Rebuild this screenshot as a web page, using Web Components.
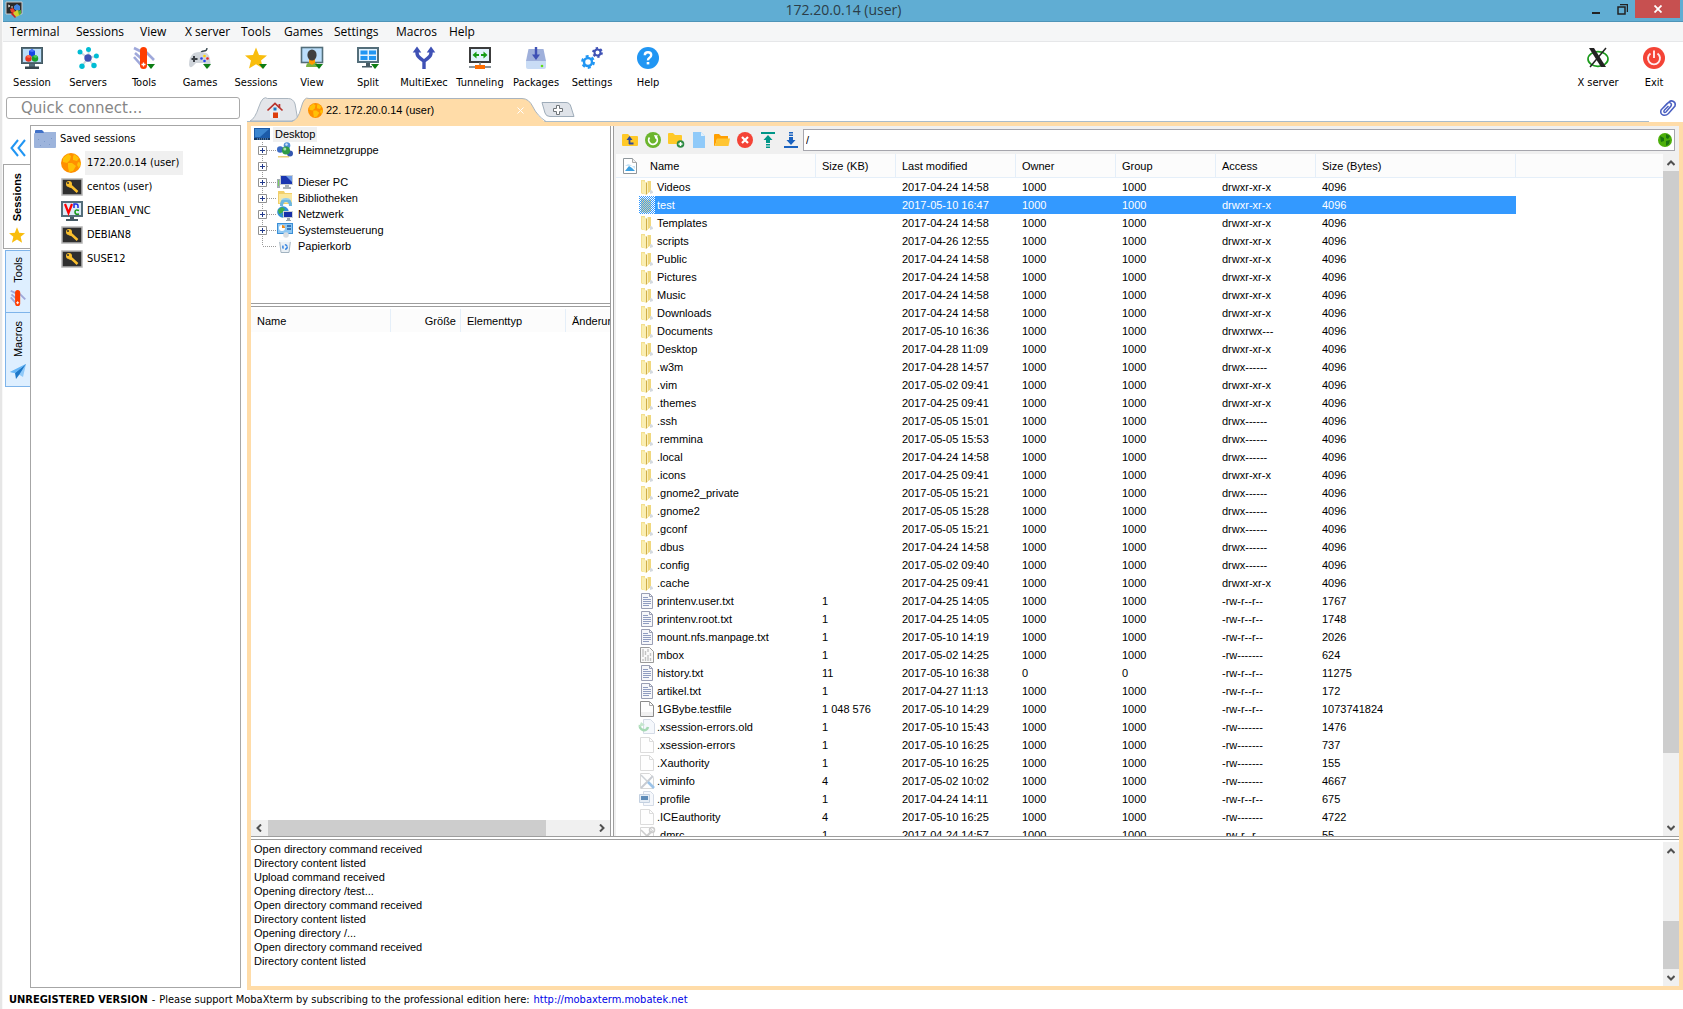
<!DOCTYPE html>
<html lang="en">
<head>
<meta charset="utf-8">
<title>172.20.0.14 (user)</title>
<style>
html,body{margin:0;height:100%}
body{background:#fff;color:#000;overflow:hidden;
 --ui:"DejaVu Sans Condensed","DejaVu Sans",sans-serif;
 --list:"Liberation Sans",Arial,sans-serif;
 --seg:"Open Sans","Noto Sans",sans-serif;
 font:11px/14px var(--list)}
</style>
</head>
<body>
<moba-app></moba-app>
<script>
const ICONS = {
 app:['0 0 16 16','<path d="M0 0h16v12H0z" fill="#2b2b2b" stroke="#ccc"/><path d="M2 3l2 1-2 1M5 5h2" stroke="#fff" fill="none" stroke-width=".8"/><path d="M4 7l3-1 2 3v3L5 10z" fill="#e8412c"/><path d="M8 4l3-2 3 2v4l-3 1-3-2z" fill="#3f83e0"/><path d="M7 11l4-3 4 2-1 3-4 2z" fill="#d6ce2c"/><path d="M12 9l3-1v4l-2 1z" fill="#55b033"/><path d="M6 10l4 5-1 1-4-4z" fill="#c22"/>'],
 session:['0 0 22 22','<rect x=".5" y=".5" width="21" height="16" fill="#546e7a" stroke="#455a64"/><rect x="2" y="2" width="18" height="13" fill="#bbdefb"/><path d="M8 17h6v3H8z" fill="#546e7a"/><path d="M4 19.500h14V22H4z" fill="#37474f"/><path d="M8 4l3-2 3 2v4l-3 2-3-2z" fill="#1546e8"/><path d="M8 4l3 1 3-1-3-2z" fill="#4b78ff"/><circle cx="7.500" cy="11.500" r="3.200" fill="#e8321c"/><path d="M5 10l2.500-2 3 1-2 2z" fill="#ff6a4d"/><circle cx="14" cy="11.500" r="3.200" fill="#17a02c"/><path d="M12 9l3-1 2 2-3 1z" fill="#49c95c"/>'],
 servers:['0 0 22 22','<path d="M11 11L3 5M11 11l1-9M11 11l8-2M11 11l6 8M11 11l-6 8" stroke="#cfd8dc" stroke-width="2"/><g fill="#00bcd4"><circle cx="3" cy="5" r="2.500"/><circle cx="11.500" cy="2.600" r="2.500"/><circle cx="19.400" cy="9" r="2.500"/><circle cx="17" cy="18.500" r="2.700"/><circle cx="5" cy="19.300" r="2.700"/></g><circle cx="11" cy="11" r="3.700" fill="#3f51b5"/>'],
 knife:['0 0 22 22','<path d="M1 1l8 4M2 6l8 7M1 10l8 9M11 3l10 10" stroke="#9fa8da" stroke-width="2.600"/><rect x="7" y="0" width="7" height="22" rx="3.500" fill="#ff3d00"/><path d="M10.500 15.500v4M8.500 17.500h4" stroke="#fff" stroke-width="1.300"/>'],
 pad:['0 0 22 22','<path d="M11 8q1-4 4-4t3-3" stroke="#37474f" fill="none" stroke-width="1.300"/><path d="M5 6q6-2 12 0 3 1 4 6t0 8q-2 2-4-1l-2-3H7l-3 3q-3 3-4-1 0-9 5-12z" fill="#cfd4da"/><path d="M5 9v6M2.500 12h6" stroke="#3a3f45" stroke-width="2"/><circle cx="15.500" cy="9" r="1.300" fill="#fdd800"/><circle cx="12.500" cy="11.500" r="1.300" fill="#2244ee"/><circle cx="18.500" cy="11.500" r="1.300" fill="#e22"/><circle cx="15.500" cy="14" r="1.300" fill="#2244ee"/>'],
 star:['0 0 22 22','<path d="M11 .5l3 7.500 8 .5-6 5 2 8-7-4.300L4 21.500l2-8-6-5L8 8z" fill="#f9bd0c"/>'],
 view:['0 0 22 22','<rect x=".5" y=".5" width="21" height="15" fill="#bbdefb" stroke="#546e7a" stroke-width="1.600"/><path d="M5 20q0-5 6-5t6 5z" fill="#7cb342"/><path d="M8 12h6v4l-3 2-3-2z" fill="#ff9800"/><ellipse cx="11" cy="8" rx="4.600" ry="5.600" fill="#3f3f3f"/>'],
 split:['0 0 22 22','<rect x="1" y="1" width="20" height="14" fill="#e3f2fd" stroke="#546e7a" stroke-width="2"/><path d="M3.500 3.500h7v4h-7zM12 3.500h7v4h-7zM3.500 9h7v4h-7zM12 9h7v4h-7z" fill="#2196f3"/><path d="M9 16h4v3h2v1.500H5V19h4z" fill="#455a64"/>'],
 multi:['0 0 22 22','<path d="M11 22v-8M4 4v2q0 3 3.500 5.500T11 15q0-1 3.500-3.500T18 6V4" stroke="#3f51b5" stroke-width="3.400" fill="none"/><path d="M4-.5l4.300 6H-.3zM18-.5l4.300 6h-8.600z" fill="#3f51b5"/>'],
 tunnel:['0 0 22 22','<rect x="1" y="1" width="20" height="14" fill="#e3f2fd" stroke="#3c3c3c" stroke-width="2"/><path d="M3.500 8l4-3.500V7h2.500v2H7.500v2.500zM18.500 8l-4-3.500V7H12v2h2.500v2.500z" fill="#169b16"/><path d="M11 15.500V19M0 20h22" stroke="#8a9399" stroke-width="1.800"/><rect x="6" y="18" width="10" height="4" fill="#ff6d00"/>'],
 pack:['0 0 22 22','<path d="M3.500 2h15L21 14H1z" fill="#9fb0db"/><path d="M1 14h20v6q0 2-2 2H3q-2 0-2-2z" fill="#c9dcf5"/><path d="M11 0v8" stroke="#3f51b5" stroke-width="2.400"/><path d="M11 13L7 7.500h8z" fill="#3f51b5"/><circle cx="17" cy="19" r="1.300" fill="#64dd17"/>'],
 gears:['0 0 22 22','<circle cx="7" cy="15" r="4" fill="none" stroke="#2196f3" stroke-width="2.500"/><circle cx="7" cy="15" r="5.800" fill="none" stroke="#2196f3" stroke-width="2.200" stroke-dasharray="3 3.070"/><circle cx="16.500" cy="5.500" r="3" fill="none" stroke="#3f51b5" stroke-width="2"/><circle cx="16.500" cy="5.500" r="4.500" fill="none" stroke="#3f51b5" stroke-width="1.800" stroke-dasharray="2.300 2.410"/>'],
 help:['0 0 22 22','<circle cx="11" cy="11" r="11" fill="#2196f3"/><path d="M7.800 8.200q0-3 3.200-3t3.200 2.800q0 1.700-1.700 2.700T11 13.400" stroke="#fff" stroke-width="2.400" fill="none"/><path d="M9.700 15h2.600v2.400H9.700z" fill="#fff"/>'],
 xsrv:['0 0 22 22','<ellipse cx="11" cy="12" rx="10" ry="7.300" fill="none" stroke="#1b9a1b" stroke-width="1.700"/><path d="M2 1h5l12 19h-5z" fill="#222"/><path d="M19 1L3 20" stroke="#222" stroke-width="1.500"/>'],
 exit:['0 0 22 22','<circle cx="11" cy="11" r="11" fill="#f44336"/><path d="M7.500 6.500a6 6 0 1 0 7 0M11 3.500V11" stroke="#ffebee" stroke-width="1.900" fill="none"/>'],
 clip:['0 0 16 16','<path d="M3 8l6-6q2-2 4.500-.5T15 6l-6.500 7.500Q6 16 3 15t-2-5l6-6.500q2-1.500 3.500-.5t.5 3L6 12q-1.500 1-2 0t.5-2l4-4" stroke="#4a5fc1" stroke-width="1.500" fill="none"/>'],
 home:['0 0 16 16','<path d="M3 8h10v8H3z" fill="#eceff1"/><path d="M11.500 2h1.800v4h-1.800z" fill="#b33"/><path d="M.5 8.500L8 1.500l7.500 7" stroke="#b8322b" stroke-width="1.700" fill="none"/><path d="M6 10.500h5V16H6z" fill="#dd3f0c"/><path d="M6.500 5.500h3v3h-3z" fill="#1a78c2"/>'],
 globe:['0 0 20 20','<circle cx="10" cy="10" r="10" fill="#ff8f00"/><path d="M2 5l5-4 3 2-1 4-3 3-4-1z" fill="#ffc107"/><path d="M13 1l5 4-2 3-4-1 0-3z" fill="#ffc107"/><path d="M7 10l4 0 4 3-3 5-4 1-1-5z" fill="#ffc107"/><path d="M17 9l3 1-2 5-2-3z" fill="#ffc107"/>'],
 greenglobe:['0 0 14 14','<circle cx="7" cy="7" r="7" fill="#4caf0a"/><path d="M2 3l4 2v3L3 9zM8 1l4 2-2 3-2-1zM8 8l4-1-1 4-3 2z" fill="#1c7410"/>'],
 folder:['0 0 22 18','<path d="M1 1q0-1 1-1h6l3 3h10q1 0 1 1v13H1z" fill="#3f70c8"/><path d="M0 4q0-1 1-1h8l2-1h11v15q0 1-1 1H1q-1 0-1-1z" fill="#9db4dc"/><path d="M4 9h1v1H4zm6 2h1v1h-1zm7-3h1v1h-1zM6 15h1v1H6zm9-1h1v1h-1z" fill="#7c9acb"/>'],
 key:['0 0 22 18','<path d="M1 1h20v16H1z" fill="#2f2f2f" stroke="#b5b5b5" stroke-width="1.500"/><circle cx="8" cy="6" r="3" fill="#fbc02d"/><circle cx="7" cy="5" r="1" fill="#2f2f2f"/><path d="M9.500 7.500l7 6.500M8 8l3 1" stroke="#fbc02d" stroke-width="2.400"/>'],
 vnc:['0 0 22 20','<rect x="1" y="1" width="20" height="14" fill="#ddebf8" stroke="#546e7a" stroke-width="2"/><path d="M9 16h4v2h4v2H5v-2h4z" fill="#455a64"/><path d="M4 3l3.500 9L11 3" stroke="#f00" stroke-width="2.200" fill="none"/><path d="M13 7V3h2q2 0 2 2v2" stroke="#1a2ce0" stroke-width="1.500" fill="none"/><path d="M18 9.500q-4-1.500-4 1.500t4 2" stroke="#169b16" stroke-width="1.600" fill="none"/>'],
 plane:['0 0 16 16','<path d="M0 8L16 0 13 13 8 10z" fill="#90caf9"/><path d="M16 0L5 9l1 6 3-4z" fill="#1e78c8"/><path d="M0 8L16 0 5 9z" fill="#64b5f6"/>'],
 chev:['0 0 16 16','<path d="M8 0L1.500 8 8 16M15 0L8.500 8l6.500 8" stroke="#2196f3" stroke-width="2" fill="none"/>'],
 desk:['0 0 16 14','<path d="M0 1h16v12H0z" fill="#1c5ba8"/><path d="M1 2h14l-9 8H1z" fill="#3c86cf"/><path d="M0 11h16v2H0z" fill="#17375f"/><path d="M3 12h11" stroke="#7fb0e0" stroke-dasharray="1 1"/>'],
 heim:['0 0 16 16','<path d="M1 14h11v1.500H1z" fill="#ecd07a"/><circle cx="10" cy="3.500" r="3.300" fill="#4f8fd6"/><circle cx="3.200" cy="7.500" r="3.200" fill="#3c6bc4"/><circle cx="13" cy="11.500" r="3" fill="#3457b0"/><circle cx="9" cy="8.500" r="4" fill="#2f9b46"/><circle cx="7.800" cy="7" r="1.500" fill="#a9dfae"/><circle cx="9.500" cy="2.500" r="1.200" fill="#cfe3f8"/>'],
 pc:['0 0 16 16','<path d="M0 5h3v9H0z" fill="#a3adb5"/><path d="M1 6h1v6H1z" fill="#7dd05e"/><path d="M3 1h13v10H3z" fill="#c9cfd4"/><path d="M4 2h11v8H4z" fill="#1a36b0"/><path d="M9 2h6v6z" fill="#6e9be8"/><path d="M8 11h4v2h2v2H6v-2h2z" fill="#a9b2b8"/>'],
 lib:['0 0 16 16','<path d="M1 1h6l1 2h7v11H1z" fill="#f1cf6b"/><path d="M2 4h13v9H2z" fill="#fbe79d"/><path d="M3 16q0-8 6-8t6 8h-3q0-4-3-4t-3 4z" fill="#6bb6e0"/><path d="M4 9h10" stroke="#bfe3f5"/>'],
 netz:['0 0 16 16','<circle cx="6" cy="6" r="5.800" fill="#2f8fd8"/><path d="M1 4l4-3 3 2-3 4-3 1zM5 8l4 1-2 3z" fill="#3fae49"/><path d="M6 5h10v7H6z" fill="#cdd3d8"/><path d="M7 6h8v5H7z" fill="#1730a8"/><path d="M10 12h3v2h1v1H9v-1h1z" fill="#9aa4ab"/>'],
 sys:['0 0 16 16','<path d="M0 1h16v11H0z" fill="#3c8fd6"/><path d="M1 2h14v9H1z" fill="#8ec7f2"/><circle cx="5" cy="6" r="3" fill="#fff"/><path d="M5 6V3a3 3 0 0 1 3 3z" fill="#ef8b1d"/><path d="M10 4h4M10 7h4" stroke="#1d5ea8" stroke-width="1.400"/><circle cx="9" cy="13" r="2.800" fill="#d9dee2"/>'],
 bin:['0 0 16 16','<path d="M2.500 2.500h11l-1.500 12H4z" fill="#eaf0f5" stroke="#a2b3c0"/><path d="M2 2h12v2H2z" fill="#f4f8fb"/><circle cx="8" cy="9" r="2.200" fill="none" stroke="#2c7fe0" stroke-width="1.400" stroke-dasharray="3 1.600"/>'],
 up:['0 0 16 16','<path d="M0 3q0-1 1-1h5l2 2h7q1 0 1 1v8q0 1-1 1H1q-1 0-1-1z" fill="#ffc928"/><path d="M7.500 12V6M7 11.500h4.500" stroke="#304a9c" stroke-width="1.800"/><path d="M7.500 4l3 4h-6z" fill="#304a9c"/>'],
 reload:['0 0 16 16','<circle cx="8" cy="8" r="8" fill="#6cb52d"/><path d="M4.500 5.500a4.300 4.300 0 1 0 6.500-.5" stroke="#fff" stroke-width="1.800" fill="none"/><path d="M9 3l4 .5-2.500 3.500z" fill="#fff"/>'],
 newf:['0 0 16 16','<path d="M0 2q0-1 1-1h4l2 2h6q1 0 1 1v8H1q-1 0-1-1z" fill="#ffc928"/><circle cx="12.500" cy="12" r="3.800" fill="#2e8b45"/><path d="M12.500 10v4M10.500 12h4" stroke="#fff" stroke-width="1.500"/>'],
 page:['0 0 16 16','<path d="M2 0h8l4 4v12H2z" fill="#90caf9"/><path d="M10 0v4h4z" fill="#e1f1fd"/>'],
 open:['0 0 16 16','<path d="M0 3q0-1 1-1h4l2 2h7v3H3l-2 7q-1 0-1-1z" fill="#ff9f00"/><path d="M3 6.500h13l-1.500 7.500H1z" fill="#ffc533"/>'],
 del:['0 0 16 16','<circle cx="8" cy="8" r="8" fill="#f44336"/><path d="M5 5l6 6M11 5l-6 6" stroke="#fff" stroke-width="2.200"/>'],
 upl:['0 0 16 16','<path d="M1 1h14" stroke="#009688" stroke-width="2"/><path d="M8 3l4.500 5H10v3H6V8H3.500zM6 12h4v1.500H6zM6 14.500h4V16H6z" fill="#009688"/>'],
 dwn:['0 0 16 16','<path d="M1 15h14" stroke="#1b63c0" stroke-width="2"/><path d="M8 13L3.500 8H6V5h4v3h2.500zM6 2.500h4V4H6zM6 0h4v1.500H6z" fill="#1b63c0"/>'],
 head:['0 0 14 16','<path d="M.5.5h9l4 4v11H.5z" fill="#fff" stroke="#8f979c"/><path d="M9.500.5v4h4" fill="#eee" stroke="#aaa"/><path d="M2 13l4-5 3 2 3 3z" fill="#3a9fe0"/><path d="M2 8l3-2 3 1 4 4v-3H2z" fill="#c6e3f6"/>'],
 dir:['0 0 16 18','<path d="M2 2h4v14H3l-1-1z" fill="#f3df8f"/><path d="M3 3l4 1v13l-4-2z" fill="#faeeb2"/><path d="M7 5l1-1v12l-1 1z" fill="#cfae4a"/><path d="M8 3h4v10l-4 3z" fill="#f0d87f"/><path d="M8 3h1v12H8z" fill="#fbf0bb"/><path d="M11 12q3 0 3 3l-3 1z" fill="#d3d9df"/>'],
 dirsel:['0 0 16 18','<path d="M2 3l2-1 4 2 4-1v12l-4 2-6-1z" fill="#e2d78f"/><path d="M0 0h16v18H0z" fill="url(#d)"/><defs><pattern id="d" width="2" height="2" patternUnits="userSpaceOnUse"><path d="M0 0h1v1H0zM1 1h1v1H1z" fill="#3399ff"/></pattern></defs>'],
 txt:['0 0 16 18','<path d="M2.500 1.500h8l3 3v12h-11z" fill="#f6f7fa" stroke="#9a9fb4"/><path d="M10.500 1.500v3h3" fill="none" stroke="#9a9fb4"/><path d="M4 5.500h5M4 7.500h8M4 9.500h8M4 11.500h8M4 13.500h6" stroke="#8f9cc0"/>'],
 mbox:['0 0 16 18','<path d="M1.500 1.500h9l4 4v11h-13z" fill="#fafafa" stroke="#9a9a9a"/><path d="M4 3v8M6.500 5v4M9 3v3M4 13v2M6.500 11v4M9 9v6M11.500 7v3M11.500 12v3" stroke="#c4c4c4" stroke-width="1.400"/>'],
 file:['0 0 16 18','<path d="M1.500 1.500h9l4 4v11h-13z" fill="#fdfdfd" stroke="#8a8a8a"/><path d="M10.500 1.500v4h4" fill="none" stroke="#aaa"/><path d="M2 12h12v4H2z" fill="#f0f0f0"/>'],
 ghost:['0 0 16 18','<path d="M1.500 1.500h9l4 4v11h-13z" fill="#fefefe" stroke="#dcdcdc"/><path d="M10.500 1.500v4h4" fill="none" stroke="#dcdcdc"/>'],
 old:['0 0 16 18','<path d="M4.500 1.500h7l4 4v10h-11z" fill="#f5f8fc" stroke="#d4dbe6"/><path d="M1 7a4 4 0 0 0 8 2" fill="none" stroke="#a6d9b4" stroke-width="2.600"/><path d="M0 9l2-5 4 3z" fill="#c4e6cd"/>'],
 vim:['0 0 16 18','<path d="M1.500 1.500h9l4 4v11h-13z" fill="#fefefe" stroke="#d8d8d8"/><path d="M2 16L14 4" stroke="#c8ccd2" stroke-width="2"/><path d="M2 3l7 7" stroke="#ccd1d6" stroke-width="1.500"/><path d="M9 10l6 6" stroke="#9cc3e8" stroke-width="2.600"/>'],
 prof:['0 0 16 18','<path d="M4.500 1.500h7l3 3v11h-10z" fill="#f6f8fc" stroke="#d4dbe6"/><path d="M.5 4.500h10v8H.5z" fill="#e6edf5" stroke="#c3d0e0"/><path d="M2 6h7v4H2z" fill="#5f8cb8"/>'],
 dm:['0 0 16 18','<path d="M1.500 1.500h9l4 4v11h-13z" fill="#fefefe" stroke="#d8d8d8"/><path d="M2 16L13 5" stroke="#ccc" stroke-width="2.200"/><path d="M2 4l10 10" stroke="#ccc" stroke-width="1.500"/><circle cx="13" cy="4" r="2.500" fill="none" stroke="#ccc" stroke-width="1.500"/>'],
 plus:['0 0 10 10','<path d="M3.500.5h3v3h3v3h-3v3h-3v-3h-3v-3h3z" fill="#fff" stroke="#6f7479"/>'],
 expand:['0 0 9 9','<path d="M.5.5h8v8h-8z" fill="#fff" stroke="#919191"/><path d="M2 4.500h5M4.500 2v5" stroke="#223a8c"/>']
};
const $ = (el, css, html) => { el.attachShadow({mode:'open'}).innerHTML =
 `<style>*{box-sizing:border-box}button,input{font:inherit;color:inherit;margin:0;padding:0;border:0;background:none;outline:0}ul,p,h1{margin:0;padding:0;list-style:none;font:inherit}a{text-decoration:none}${css}</style>${html}`; };
const def = (n, css, html) => customElements.define(n, class extends HTMLElement{
 connectedCallback(){ if(!this.shadowRoot) $(this, css, typeof html==='function'?html(this):html); }});

def('moba-icon', ':host{display:block;flex:none;line-height:0}svg{display:block;overflow:visible}',
 e => { const [v,b]=ICONS[e.getAttribute('name')]; const [, , w,h]=v.split(' ');
  const s=e.getAttribute('size'); return `<svg viewBox="${v}" width="${s||w}" height="${s||h}" aria-hidden="true">${b}</svg>`; });
const ic = (n,s) => `<moba-icon name="${n}"${s?` size="${s}"`:''}></moba-icon>`;

def('moba-scroll', `:host{display:flex;background:#f0f0f0;flex:none}
 :host([dir=v]){flex-direction:column;width:16px}:host([dir=h]){height:16px}
 button{flex:none;width:16px;height:17px;display:grid;place-items:center}
 :host([dir=h]) button{height:16px}
 .t{flex:1;display:flex;flex-direction:inherit;min-width:0;min-height:0}
 .a{flex:var(--before) 0 0}.b{flex:var(--thumb) 0 0;background:#cdcdcd}.c{flex:var(--after) 0 0}`,
 e => { const v=e.getAttribute('dir')==='v';
  const ar=d=>`<svg width="8" height="8" viewBox="0 0 8 8"><path d="${d}" stroke="#505050" stroke-width="2" fill="none"/></svg>`;
  return `<button aria-label="Back">${ar(v?'M.5 6L4 2.500 7.500 6':'M6 .5L2.500 4 6 7.500')}</button><div class="t"><div class="a"></div><div class="b"></div><div class="c"></div></div><button aria-label="Forward">${ar(v?'M.5 2L4 5.500 7.500 2':'M2 .5L5.500 4 2 7.500')}</button>`; });

def('moba-titlebar', `:host{display:flex;height:22px;background:#60add3;border-bottom:1px solid #4e94b8;align-items:flex-start;padding:0 3px 0 3px;margin-left:3px}
 moba-icon{margin-top:2px}
 h1{flex:1;text-align:center;font:14px/20px var(--seg);color:#2b3d48;padding-left:82px}
 button{width:26px;height:18px;display:grid;place-items:center}.x{width:45px;background:#c75050}`,
 `${ic('app')}<h1>172.20.0.14 (user)</h1>
 <button aria-label="Minimize"><svg width="9" height="9"><path d="M0 8h8" stroke="#222" stroke-width="2"/></svg></button>
 <button aria-label="Restore"><svg width="11" height="11"><path d="M1 3h7v7H1zM3 .5h7.500V8" stroke="#222" stroke-width="1.500" fill="none"/></svg></button>
 <button class="x" aria-label="Close"><svg width="8" height="8"><path d="M.5.5l7 7M7.500.5l-7 7" stroke="#fff" stroke-width="1.800"/></svg></button>`);

def('moba-menubar', `:host{display:grid;grid-template-columns:66px 64px 45px 56px 43px 50px 62px 53px 1fr;height:20px;background:#f5f6f7;border-bottom:1px solid #e6e7e9;margin-left:3px;padding-left:7px;font:12px/19px var(--seg)}
 button{text-align:left;white-space:nowrap}`,
 ['Terminal','Sessions','View','X server','Tools','Games','Settings','Macros','Help'].map(t=>`<button>${t}</button>`).join(''));

const TB=[['session','Session'],['servers','Servers'],['knife','Tools',1],['pad','Games',1],['star','Sessions',1],['view','View',1],['split','Split',1],['multi','MultiExec'],['tunnel','Tunneling'],['pack','Packages'],['gears','Settings'],['help','Help']];
const tb=([i,t,d])=>`<button><span class="i">${ic(i)}${d?'<i></i>':''}</span><span>${t}</span></button>`;
def('moba-toolbar', `:host{display:flex;padding:5px 1px 0 4px;height:53px;font:11px/14px var(--ui)}
 button{width:56px;display:flex;flex-direction:column;align-items:center;gap:7px;white-space:nowrap}
 .i{position:relative}i{position:absolute;right:0;bottom:0;border:4px solid transparent;border-top:5px solid #0c7d14;border-bottom:0}
 .sp{flex:1}`, TB.map(tb).join('')+'<span class="sp"></span>'+tb(['xsrv','X server'])+tb(['exit','Exit']));

def('moba-quick', `:host{display:block;padding:2px 7px 0 6px}input{width:100%;height:22px;border:1px solid #aaa;border-radius:3px;padding:0 14px;font:15px/20px "DejaVu Sans",sans-serif;display:block;background:#fff}input::placeholder{color:#868686;opacity:1}`,
 '<input type="text" aria-label="Quick connect" placeholder="Quick connect...">');

def('moba-sidetabs', `:host{display:flex;flex-direction:column;width:28px;flex:none;padding-top:15px}
 .c{height:24px;display:flex;align-items:flex-start;padding-left:7px;align-self:flex-start}
 .tab{display:flex;flex-direction:column;align-items:center;background:#deefff;border:1px solid #7eb4ea;border-right:0;margin:0 1px 0 2px;font:11px/14px var(--list);height:75px;justify-content:flex-end;gap:7px;padding-bottom:6px;margin-top:-1px}
 .tab.on{background:#fff;border-color:#a6a6a6;margin:0;font-weight:bold;height:85px;padding:0 2px 5px 0;gap:6px}
 .tab.two{height:63px;margin-top:1px}
 .tab span{writing-mode:vertical-rl;transform:rotate(180deg)}`,
 `<button class="c" aria-label="Collapse">${ic('chev')}</button>
 <button class="tab on"><span>Sessions</span>${ic('star',16)}</button>
 <button class="tab two"><span>Tools</span>${ic('knife',16)}</button>
 <button class="tab"><span>Macros</span>${ic('plane')}</button>`);

def('moba-sessions', `:host{display:block;flex:1;border:1px solid #a6a6a6;margin:0 6px 0 -1px;font:11px/14px var(--ui);padding-top:1px}
 li{display:flex;align-items:center;height:24px;padding-left:30px;gap:2px}
 li.r{padding-left:3px;gap:4px}
 a{color:inherit;padding:5px 4px 5px 2px;white-space:nowrap}
 .r a{padding-left:0}
 li.s a{background:#f0f0f0}
 li>span{width:22px;flex:none}`,
 `<ul><li class="r">${ic('folder')}<a href="#">Saved sessions</a></li>`+[['globe','172.20.0.14 (user)','s'],['key','centos (user)'],['vnc','DEBIAN_VNC'],['key','DEBIAN8'],['key','SUSE12']].map(([i,t,c])=>`<li class="${c||''}"><span>${ic(i)}</span><a href="#">${t}</a></li>`).join('')+'</ul>');

def('moba-tabs', `:host{display:flex;height:27px;padding:3px 0 0 3px;font:11px/20px var(--list);border-bottom:1px solid #a9bccb;align-items:flex-end;margin-right:34px}
 button{position:relative;display:flex;align-items:center;height:23px;isolation:isolate}
 button>svg{position:absolute;inset:0;z-index:-1;width:100%;height:100%;overflow:visible}
 .h{width:48px;justify-content:center;padding-left:1px}.a{width:253px;margin:0 0 -1px -5px;height:24px;padding-left:15px;gap:3px;z-index:1}.a span{flex:1;text-align:left;white-space:nowrap}.a b{width:8px;margin-right:22px}
 .p{width:33px;height:15px;justify-content:center;margin:0 0 4px -5px}`,
 `<button class="h" aria-label="Home"><svg viewBox="0 0 49 23" preserveAspectRatio="none"><path d="M0 23Q5 21 9 9T18 .5H39Q44 .5 46 6L49 23z" fill="#e4e6ea" stroke="#a9b4be"/></svg>${ic('home')}</button>
 <button class="a"><svg viewBox="0 0 253 24" preserveAspectRatio="none"><path d="M-1 24Q5 22 8 10T16 .5H229Q236 .5 240 9T252 24z" fill="#ffdca8"/><path d="M-1 23Q5 22 8 10T16 .5H229Q236 .5 240 9T253 23.500" fill="none" stroke="#a9b4be"/></svg>${ic('globe',15)}<span>22. 172.20.0.14 (user)</span><b><svg width="7" height="7"><path d="M.5.5l6 6M6.500.5l-6 6" stroke="#fff"/></svg></b></button>
 <button class="p" aria-label="New tab"><svg viewBox="0 0 33 15" preserveAspectRatio="none"><path d="M1 .5H25Q29 .5 30 5L33 14.500H9Q5 14.500 4 11z" fill="#dfe3e9" stroke="#9eacb9"/></svg>${ic('plus')}</button>`);

def('moba-tree', `:host{display:block;background:#fff;font:11px/16px var(--list);padding-left:3px}
 li{display:flex;align-items:center;height:16px}
 a{color:inherit;padding:0 2px;line-height:15px}
 .d a{background:#f0f0f0;margin-left:3px}
 .g{width:23px;height:16px;flex:none;display:flex;align-items:center;padding-left:4px;
  background:repeating-linear-gradient(90deg,#999 0 1px,transparent 1px 2px) no-repeat 9px 8px/14px 1px,repeating-linear-gradient(#999 0 1px,transparent 1px 2px) no-repeat 8px 0/1px 16px}
 li:last-child .g{background-size:14px 1px,1px 8px}
 .e .g{background-size:6px 1px,1px 16px}
 .c a{margin-left:3px}`,
 `<ul><li class="d">${ic('desk')}<a href="#">Desktop</a></li>`+[['heim','Heimnetzgruppe'],['',''],['pc','Dieser PC'],['lib','Bibliotheken'],['netz','Netzwerk'],['sys','Systemsteuerung'],['bin','Papierkorb']].map(([i,t],k)=>`<li class="${i?'c':'e'}"><span class="g">${k<6?ic('expand'):''}</span>${i?ic(i)+`<a href="#">${t}</a>`:''}</li>`).join('')+'</ul>');

def('moba-local', `:host{display:flex;flex-direction:column;flex:1;min-height:0;background:#fff;border-top:1px solid #9d9d9d;font:11px/14px var(--list);overflow:hidden}
 .w{flex:1;overflow:hidden}
 table{width:420px;border-collapse:separate;border-spacing:0;table-layout:fixed;margin-top:2px}
 th{font-weight:normal;text-align:left;padding:0 6px;height:23px;background:#fcfcfc;border-right:1px solid #e5eff9}
 th.n{text-align:right;padding-right:4px}
 moba-scroll{--before:1;--thumb:278;--after:48}`,
 `<div class="w"><table><colgroup><col style="width:140px"><col style="width:70px"><col style="width:105px"><col></colgroup><thead><tr><th>Name</th><th class="n">Größe</th><th>Elementtyp</th><th>Änderungsdatum</th></tr></thead></table></div><moba-scroll dir="h"></moba-scroll>`);

def('moba-pathbar', `:host{display:flex;align-items:center;height:28px;padding:0 4px 0 6px;gap:7px;font:11px/14px var(--list)}
 .f{flex:1;display:flex;align-items:center;background:#fff;border:1px solid #a6a6ad;height:22px;margin-left:-3px;padding:0 2px}
 input{flex:1;min-width:0;height:18px}`,
 ['up:Parent directory','reload:Refresh','newf:New folder','page:New file','open:Open','del:Delete','upl:Upload','dwn:Download'].map(s=>{const[a,b]=s.split(':');return `<button aria-label="${b}">${ic(a)}</button>`}).join('')+`<div class="f"><input aria-label="Path" value="/">${ic('greenglobe')}</div>`);

const R=`dir|Videos||04-24 14:58
dirsel|test||05-10 16:47
dir|Templates||04-24 14:58
dir|scripts||04-26 12:55
dir|Public||04-24 14:58
dir|Pictures||04-24 14:58
dir|Music||04-24 14:58
dir|Downloads||04-24 14:58
dir|Documents||05-10 16:36|drwxrwx---
dir|Desktop||04-28 11:09
dir|.w3m||04-28 14:57|drwx------
dir|.vim||05-02 09:41
dir|.themes||04-25 09:41
dir|.ssh||05-05 15:01|drwx------
dir|.remmina||05-05 15:53|drwx------
dir|.local||04-24 14:58|drwx------
dir|.icons||04-25 09:41
dir|.gnome2_private||05-05 15:21|drwx------
dir|.gnome2||05-05 15:28|drwx------
dir|.gconf||05-05 15:21|drwx------
dir|.dbus||04-24 14:58|drwx------
dir|.config||05-02 09:40|drwx------
dir|.cache||04-25 09:41
txt|printenv.user.txt|1|04-25 14:05|-rw-r--r--|1767
txt|printenv.root.txt|1|04-25 14:05|-rw-r--r--|1748
txt|mount.nfs.manpage.txt|1|05-10 14:19|-rw-r--r--|2026
mbox|mbox|1|05-02 14:25|-rw-------|624
txt|history.txt|11|05-10 16:38|-rw-r--r--|11275|0
txt|artikel.txt|1|04-27 11:13|-rw-r--r--|172
file|1GBybe.testfile|1 048 576|05-10 14:29|-rw-r--r--|1073741824
old|.xsession-errors.old|1|05-10 15:43|-rw-------|1476
ghost|.xsession-errors|1|05-10 16:25|-rw-------|737
ghost|.Xauthority|1|05-10 16:25|-rw-------|155
vim|.viminfo|4|05-02 10:02|-rw-------|4667
prof|.profile|1|04-24 14:11|-rw-r--r--|675
ghost|.ICEauthority|4|05-10 16:25|-rw-------|4722
dm|.dmrc|1|04-24 14:57|-rw-r--r--|55`.split('\n').map(l=>l.split('|'));
def('moba-files', `:host{display:flex;flex:1;min-height:0;background:#fff;font:11px/14px var(--list)}
 .w{flex:1;overflow:hidden}
 table{width:100%;border-collapse:separate;border-spacing:0;table-layout:fixed}
 th,td{padding:0 0 0 6px;text-align:left;font-weight:normal;white-space:nowrap;overflow:hidden}
 th{height:24px;background:#fcfcfc;border-right:1px solid #e5eff9;border-bottom:1px solid #e5eff9}
 th:last-child{border-right:0}
 td{height:18px}
 th>div{display:flex;align-items:center;gap:13px;padding-left:1px}
 td>div{display:flex;align-items:center;margin-left:17px}
 td>div span{flex:1;line-height:18px;padding-left:2px}
 .s td:not(:first-child):not(:last-child),.s span{background:#39f;color:#fff}
 moba-scroll{--before:0;--thumb:582;--after:66}`,
 ()=>`<div class="w"><table><colgroup><col style="width:200px"><col style="width:80px"><col style="width:120px"><col style="width:100px"><col style="width:100px"><col style="width:100px"><col style="width:200px"><col></colgroup><thead><tr><th><div>${ic('head')}Name</div></th>${['Size (KB)','Last modified','Owner','Group','Access','Size (Bytes)',''].map(t=>`<th>${t}</th>`).join('')}</tr></thead><tbody>`+
 R.map(([i,n,k,d,a,b,o])=>`<tr class="${i==='dirsel'?'s':''}"><td><div>${ic(i)}<span>${n}</span></div></td><td>${k}</td><td>2017-${d}</td><td>${o||1000}</td><td>${o||1000}</td><td>${a||'drwxr-xr-x'}</td><td>${b||4096}</td><td></td></tr>`).join('')+`</tbody></table></div><moba-scroll dir="v"></moba-scroll>`);

def('moba-log', `:host{display:flex;height:147px;flex:none;background:#fff;border-top:1px solid #9d9d9d;font:11px/14px var(--list)}
 ul{flex:1;padding:2px 3px}moba-scroll{margin-top:2px;--before:62;--thumb:48;--after:0}`,
 '<ul role="log">'+['Open directory command received','Directory content listed','Upload command received','Opening directory /test...','Open directory command received','Directory content listed','Opening directory /...','Open directory command received','Directory content listed'].map(t=>`<li>${t}</li>`).join('')+'</ul><moba-scroll dir="v"></moba-scroll>');

def('moba-workspace', `:host{display:flex;flex-direction:column;flex:1;min-height:0;background:#fff;border:4px solid #ffdca8}
 .top{flex:1;min-height:0;display:flex;border-bottom:1px solid #9d9d9d;margin-bottom:2px}
 .l{width:360px;flex:none;display:flex;flex-direction:column;border-right:1px solid #9d9d9d;margin-right:2px}
 .l moba-tree{border-bottom:1px solid #9d9d9d;margin-bottom:2px;height:178px;flex:none}
 .r{flex:1;min-width:0;display:flex;flex-direction:column;background:#f0f0f0;border-left:1px solid #9d9d9d;padding-left:2px}`,
 `<div class="top"><div class="l"><moba-tree></moba-tree><moba-local></moba-local></div><div class="r"><moba-pathbar></moba-pathbar><moba-files></moba-files></div></div><moba-log></moba-log>`);

def('moba-footer', `:host{display:flex;height:19px;flex:none;padding-left:9px;font:11px/20px var(--ui)}p{display:flex;gap:4px;white-space:nowrap}a{color:#0000e6}`,
 '<p><strong>UNREGISTERED VERSION</strong><span>-</span><span>Please support MobaXterm by subscribing to the professional edition here:</span><a href="#">http://mobaxterm.mobatek.net</a></p>');

def('moba-app', `:host{display:flex;flex-direction:column;height:100vh;background:linear-gradient(90deg,#e6e6e6 2px,#f8f8f8 2px 3px,#fff 3px)}
 .m{flex:1;min-height:0;display:flex}
 .left{width:247px;flex:none;display:flex;flex-direction:column}
 .row{flex:1;display:flex;padding:6px 0 2px 3px;min-height:0}
 .right{flex:1;min-width:0;display:flex;flex-direction:column;position:relative}
 .clip{position:absolute;right:7px;top:5px}`,
 `<moba-titlebar></moba-titlebar><moba-menubar></moba-menubar><moba-toolbar></moba-toolbar>
 <div class="m"><div class="left"><moba-quick></moba-quick><div class="row"><moba-sidetabs></moba-sidetabs><moba-sessions></moba-sessions></div></div>
 <div class="right"><moba-tabs></moba-tabs><button class="clip" aria-label="Attachments">${ic('clip')}</button><moba-workspace></moba-workspace></div></div><moba-footer></moba-footer>`);
</script>
</body>
</html>
